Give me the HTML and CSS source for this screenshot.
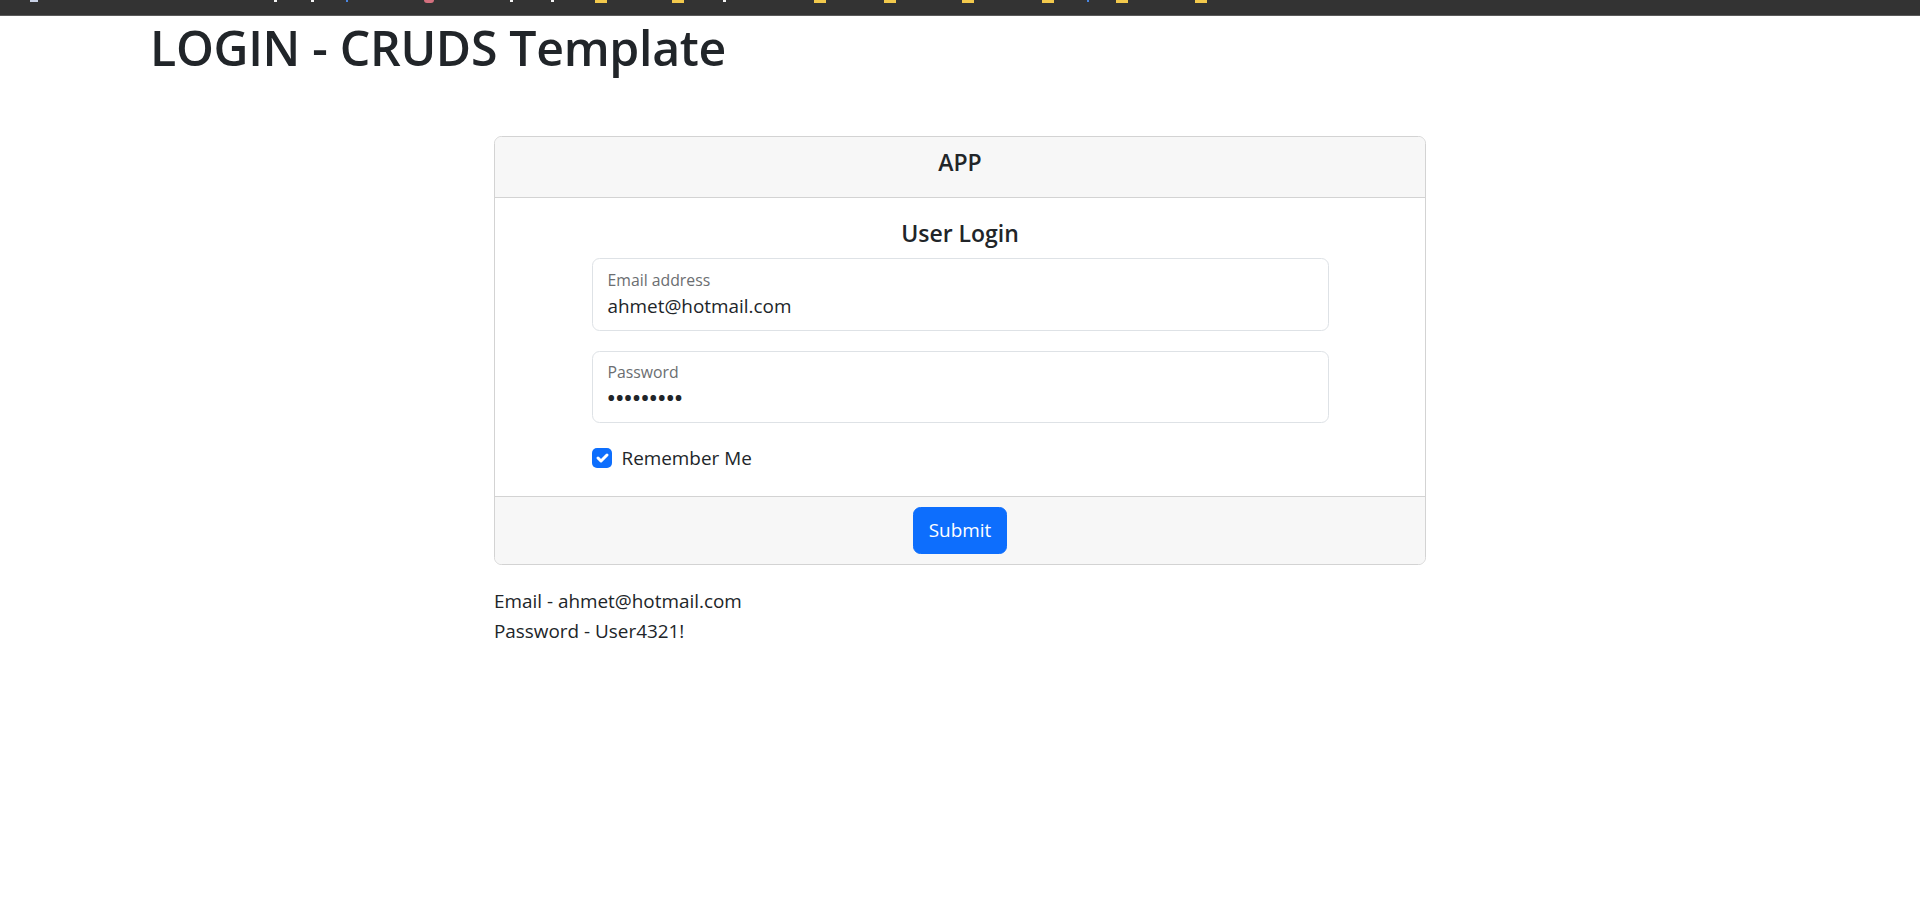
FILE: index.html
```html
<!DOCTYPE html>
<html lang="en">
<head>
<meta charset="utf-8">
<title>LOGIN - CRUDS Template</title>
<link rel="stylesheet" href="styles.css">
</head>
<body>
<div class="topbar">
  <span class="tb tb-light" style="margin-left:30px"></span>
  <span class="tb tb-white" style="margin-left:236px"></span>
  <span class="tb tb-white" style="margin-left:34px"></span>
  <span class="tb tb-blue" style="margin-left:32px"></span>
  <span class="tb tb-red" style="margin-left:76px"></span>
  <span class="tb tb-white" style="margin-left:76px"></span>
  <span class="tb tb-white" style="margin-left:38px"></span>
  <span class="tb tb-yellow" style="margin-left:41px"></span>
  <span class="tb tb-yellow" style="margin-left:65px"></span>
  <span class="tb tb-white" style="margin-left:39px"></span>
  <span class="tb tb-yellow" style="margin-left:88px"></span>
  <span class="tb tb-yellow" style="margin-left:58px"></span>
  <span class="tb tb-yellow" style="margin-left:66px"></span>
  <span class="tb tb-yellow" style="margin-left:68px"></span>
  <span class="tb tb-blue" style="margin-left:33px"></span>
  <span class="tb tb-yellow" style="margin-left:27px"></span>
  <span class="tb tb-yellow" style="margin-left:67px"></span>
</div>

<div class="container">
  <h1 class="title">LOGIN - CRUDS Template</h1>

  <div class="column">
    <div class="card">
      <div class="card-header">
        <h5 class="card-title">APP</h5>
      </div>
      <div class="card-body">
        <h5 class="card-title">User Login</h5>
        <form class="login-form">
          <div class="field">
            <span class="field-label">Email address</span>
            <span class="field-value">ahmet@hotmail.com</span>
          </div>
          <div class="field">
            <span class="field-label">Password</span>
            <span class="field-value field-dots">•••••••••</span>
          </div>
          <div class="check">
            <span class="check-box">
              <svg viewBox="0 0 20 20" width="20" height="20"><path d="m6 10 3 3 6-6" fill="none" stroke="#fff" stroke-width="3" stroke-linecap="round" stroke-linejoin="round"/></svg>
            </span>
            <span class="check-label">Remember Me</span>
          </div>
        </form>
      </div>
      <div class="card-footer">
        <button class="btn" type="button">Submit</button>
      </div>
    </div>

    <div class="creds">
      <div>Email - ahmet@hotmail.com</div>
      <div>Password - User4321!</div>
    </div>
  </div>
</div>
</body>
</html>
```

FILE: styles.css
```css
* { box-sizing: border-box; }

html, body {
  margin: 0;
  padding: 0;
  background: #fff;
}

body {
  font-family: "Open Sans", "Noto Sans", sans-serif;
  font-size: 18.9px;
  line-height: 30px;
  color: #212529;
}

.topbar {
  height: 16px;
  background: #333333;
  border-bottom: 1px solid #5a5a5a;
  display: flex;
  align-items: flex-start;
}

.tb {
  display: block;
  height: 2px;
}
.tb-light { width: 8px; background: #c9d2e6; }
.tb-white { width: 3px; background: #f4f4f4; }
.tb-blue { width: 2px; background: #4a86e0; }
.tb-red { width: 10px; height: 3px; background: #d4707e; border-radius: 0 0 5px 5px; }
.tb-yellow { width: 12px; height: 3px; background: #f2c94c; }

.container {
  width: 1650px;
  margin: 0 auto;
  padding: 0 15px;
}

.title {
  margin: 5px 0 63px;
  font-size: 48.2px;
  line-height: 52px;
  font-weight: 600;
  letter-spacing: -0.3px;
  color: #212529;
}

.column {
  width: 932px;
  margin: 0 auto;
}

.card {
  border: 1px solid #d3d3d3;
  border-radius: 7.5px;
  background: #fff;
  overflow: hidden;
}

.card-header {
  background: #f7f7f7;
  border-bottom: 1px solid #d3d3d3;
  padding: 10px 20px;
  text-align: center;
}

.card-title {
  margin: 0 0 10px;
  font-size: 23px;
  line-height: 30px;
  font-weight: 600;
  color: #212529;
  text-align: center;
}

.card-body {
  padding: 20px 20px 20px;
}

.login-form {
  width: 737px;
  margin: 0 auto;
}

.field {
  display: flex;
  flex-direction: column;
  height: 72.5px;
  border: 1px solid #dee2e6;
  border-radius: 7.5px;
  padding: 10.5px 15px 8px;
  margin-bottom: 20px;
}

.field-label {
  font-size: 15.8px;
  line-height: 21.5px;
  color: #6b6e71;
}

.field-value {
  font-size: 18.9px;
  line-height: 30px;
  color: #212529;
}

.field-dots {
  font-size: 20px;
  letter-spacing: 0.9px;
  font-weight: 700;
  line-height: 28px;
}

.check {
  display: flex;
  align-items: center;
  height: 30px;
  margin-bottom: 2.5px;
  gap: 10px;
}

.check-box {
  width: 20px;
  height: 20px;
  border-radius: 5px;
  background: #0d6efd;
  display: flex;
}

.check-label {
  color: #212529;
}

.card-footer {
  background: #f7f7f7;
  border-top: 1px solid #d3d3d3;
  padding: 10px 20px;
  text-align: center;
}

.btn {
  font-family: inherit;
  font-size: 18.9px;
  line-height: 30px;
  color: #fff;
  background: #0d6efd;
  border: 1px solid #0d6efd;
  border-radius: 7.5px;
  padding: 7.5px 15px;
  cursor: pointer;
}

.creds {
  margin-top: 21px;
  line-height: 30px;
}
```
